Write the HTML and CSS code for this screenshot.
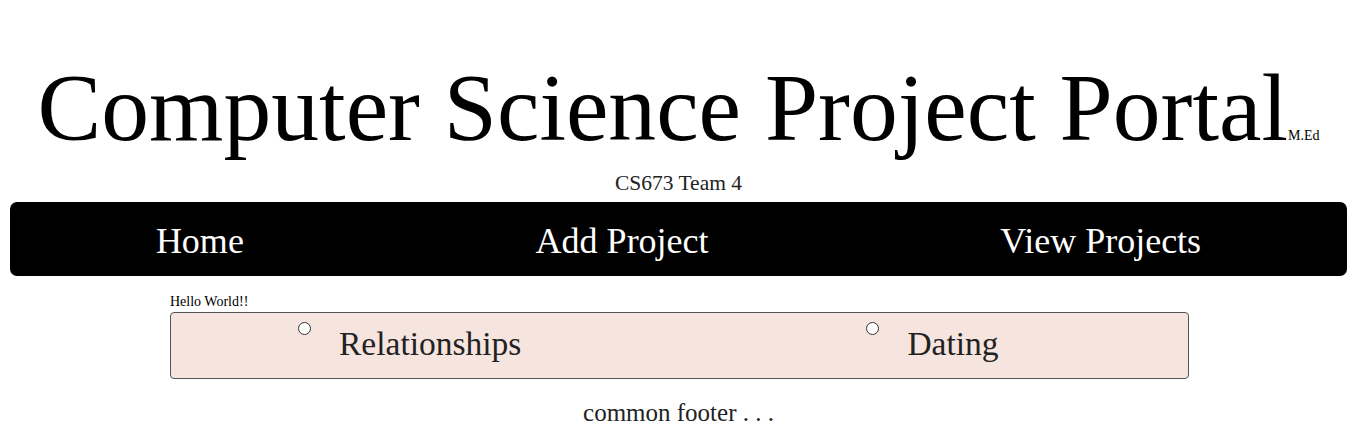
FILE: index.html
```html
<!DOCTYPE html>
<html>
<head>
<meta charset="utf-8">
<link rel="stylesheet" href="styles.css">
</head>
<body>
<header class="masthead">
  <h1 class="title">Computer Science Project Portal<span class="title-sub">M.Ed</span></h1>
  <p class="team">CS673 Team 4</p>
</header>
<nav class="navbar">
  <a class="nav-link" href="#">Home</a>
  <a class="nav-link" href="#">Add Project</a>
  <a class="nav-link" href="#">View Projects</a>
</nav>
<main class="content">
  <p class="hello">Hello World!!</p>
  <div class="choice-box">
    <label class="choice"><input type="radio" name="topic" class="choice-radio"><span class="choice-label">Relationships</span></label>
    <label class="choice"><input type="radio" name="topic" class="choice-radio"><span class="choice-label">Dating</span></label>
  </div>
</main>
<footer class="footer">common footer . . .</footer>
</body>
</html>
```

FILE: styles.css
```css
html, body {
  margin: 0;
  padding: 0;
  background: #fff;
}
body {
  font-family: "Liberation Serif", "Times New Roman", serif;
  color: #000;
  padding: 0 8px;
}
.masthead {
  display: flex;
  flex-direction: column;
  align-items: center;
}
.title {
  margin: 53px 0 0;
  font-size: 95.6px;
  font-weight: normal;
  line-height: 110px;
  white-space: nowrap;
}
.title-sub {
  font-size: 14px;
  line-height: 1;
  vertical-align: baseline;
}
.team {
  margin: 9px 0 0;
  font-size: 21.5px;
  line-height: 23px;
  color: #222;
}
.navbar {
  margin: 7px 2px 0;
  height: 74px;
  box-sizing: border-box;
  padding-top: 4px;
  background: #000;
  border-radius: 7px;
  display: flex;
  justify-content: space-around;
  align-items: center;
}
.nav-link {
  color: #fff;
  text-decoration: none;
  font-size: 36px;
}
.content {
  display: flex;
  flex-direction: column;
  align-items: center;
}
.hello {
  align-self: stretch;
  margin: 17px 0 0 162px;
  font-size: 14px;
  line-height: 18px;
}
.choice-box {
  margin: 1px 0 0 2px;
  width: 890px;
  height: 65px;
  padding-left: 127px;
  box-sizing: content-box;
  background: #f6e5de;
  border: 1px solid #555;
  border-radius: 4px;
  display: flex;
  gap: 345px;
}
.choice {
  display: flex;
  align-items: flex-start;
  color: #222;
}
.choice-radio {
  appearance: none;
  -webkit-appearance: none;
  box-sizing: border-box;
  margin: 9px 28px 0 0;
  width: 13px;
  height: 13px;
  border: 1px solid #333;
  border-radius: 50%;
  background: #fff;
}
.choice-label {
  font-size: 33.5px;
  line-height: 38px;
  margin-top: 12px;
}
.footer {
  text-align: center;
  font-size: 25px;
  line-height: 29px;
  color: #222;
  margin-top: 19px;
}
```
